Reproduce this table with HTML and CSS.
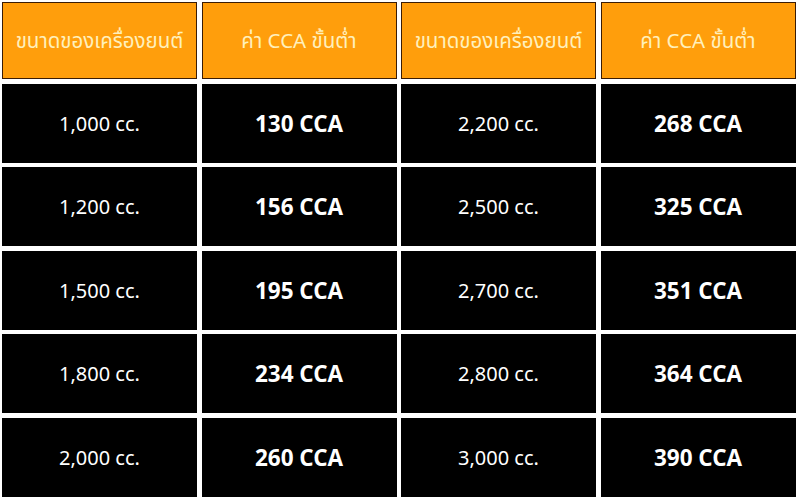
FILE: index.html
```html
<!DOCTYPE html>
<html lang="th">
<head>
<meta charset="utf-8">
<link rel="stylesheet" href="styles.css">
</head>
<body>
<div class="table">
  <div class="cell head">ขนาดของเครื่องยนต์</div>
  <div class="cell head">ค่า CCA ขั้นต่ำ</div>
  <div class="cell head">ขนาดของเครื่องยนต์</div>
  <div class="cell head">ค่า CCA ขั้นต่ำ</div>

  <div class="cell">1,000 cc.</div>
  <div class="cell strong">130 CCA</div>
  <div class="cell">2,200 cc.</div>
  <div class="cell strong">268 CCA</div>

  <div class="cell">1,200 cc.</div>
  <div class="cell strong">156 CCA</div>
  <div class="cell">2,500 cc.</div>
  <div class="cell strong">325 CCA</div>

  <div class="cell">1,500 cc.</div>
  <div class="cell strong">195 CCA</div>
  <div class="cell">2,700 cc.</div>
  <div class="cell strong">351 CCA</div>

  <div class="cell">1,800 cc.</div>
  <div class="cell strong">234 CCA</div>
  <div class="cell">2,800 cc.</div>
  <div class="cell strong">364 CCA</div>

  <div class="cell">2,000 cc.</div>
  <div class="cell strong">260 CCA</div>
  <div class="cell">3,000 cc.</div>
  <div class="cell strong">390 CCA</div>
</div>
</body>
</html>
```
FILE: styles.css
```css
html, body {
  margin: 0;
  padding: 0;
  background: #ffffff;
}
body {
  width: 798px;
  height: 502px;
  overflow: hidden;
  font-family: "Noto Sans Thai", "Noto Sans", "DejaVu Sans", sans-serif;
}
.table {
  display: grid;
  grid-template-columns: repeat(4, 195px);
  grid-template-rows: 77px repeat(5, 79px);
  column-gap: 4.5px;
  row-gap: 4.5px;
  padding: 2px 0 0 2px;
}
.cell {
  display: flex;
  align-items: center;
  justify-content: center;
  background: #000000;
  color: #ffffff;
  font-size: 20px;
  padding-top: 3px;
  box-sizing: border-box;
}
.head {
  background: #ff9e0c;
  border: 1px solid #3a1c05;
  color: #fff0bc;
  font-size: 20.5px;
  padding-top: 2px;
}
.strong {
  font-weight: 700;
  font-size: 22.5px;
}
```
